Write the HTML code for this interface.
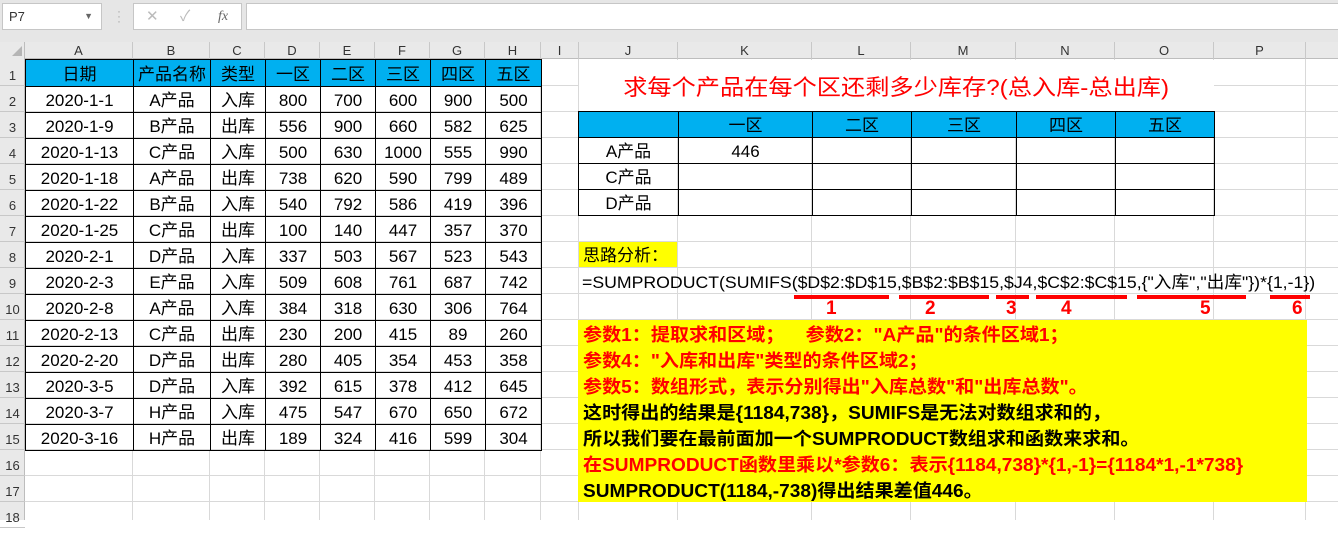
<!DOCTYPE html>
<html><head><meta charset="utf-8">
<style>
*{margin:0;padding:0;box-sizing:border-box}
body{width:1338px;height:520px;overflow:hidden;background:#fff;position:relative;font-family:"Liberation Sans","Noto Sans CJK SC",sans-serif;color:#000}
.a{position:absolute}
.vl{position:absolute;width:1px;background:#d9d9d9}
.hl{position:absolute;height:1px;background:#d9d9d9}
.ch{position:absolute;top:42px;height:17px;font-size:13px;color:#333;text-align:center;line-height:17px;border-right:1px solid #c8c8c8}
.rh{position:absolute;left:0;width:25px;font-size:13px;color:#333;text-align:center;border-bottom:1px solid #c8c8c8}
table{border-collapse:collapse;position:absolute;table-layout:fixed}
td{border:1px solid #000;text-align:center;font-size:17px;padding:3px 0 0 0;white-space:nowrap;overflow:hidden;line-height:20px}
.bl{background:#00b0f0}
.y{background:#ffff00}
.r{color:#f00}
.t{position:absolute;left:583px;font-size:18px;font-weight:bold;white-space:nowrap;line-height:26px;transform-origin:0 0;transform:scaleX(1.06)}
.u{position:absolute;top:295px;height:4px;background:#f00}
.n{position:absolute;top:298px;color:#f00;font-size:19px;font-weight:bold}
</style></head><body>
<div class="a" style="left:0;top:0;width:1338px;height:42px;background:#e6e6e6"></div>
<div class="a" style="left:2px;top:3px;width:100px;height:27px;background:#fff;border:1px solid #c6c6c6;font-size:13px;line-height:25px;padding-left:6px;color:#333">P7<span style="position:absolute;right:8px;top:0;font-size:9px;color:#666">▼</span></div>
<div class="a" style="left:117px;top:9px;font-size:12px;color:#aaa;line-height:5px">·<br>·<br>·</div>
<div class="a" style="left:133px;top:3px;width:109px;height:27px;background:#fff;border:1px solid #c6c6c6;font-size:15px;line-height:25px;color:#bbb"><span style="position:absolute;left:12px">✕</span><span style="position:absolute;left:46px">✓</span><span style="position:absolute;left:84px;color:#666;font-style:italic;font-family:'Liberation Serif',serif;font-size:14px">fx</span></div>
<div class="a" style="left:246px;top:3px;width:1100px;height:27px;background:#fff;border:1px solid #c6c6c6"></div>
<div class="a" style="left:0;top:42px;width:1338px;height:17px;background:#e9e9e9;border-bottom:1px solid #bdbdbd"></div>
<div class="a" style="left:0;top:42px;width:25px;height:478px;background:#e9e9e9;border-right:1px solid #bdbdbd"></div>
<div class="a" style="left:12px;top:46px;width:0;height:0;border-left:10px solid transparent;border-bottom:10px solid #b5b5b5"></div>
<div class="ch" style="left:25px;width:108px">A</div>
<div class="ch" style="left:133px;width:77px">B</div>
<div class="ch" style="left:210px;width:55px">C</div>
<div class="ch" style="left:265px;width:55px">D</div>
<div class="ch" style="left:320px;width:55px">E</div>
<div class="ch" style="left:375px;width:55px">F</div>
<div class="ch" style="left:430px;width:55px">G</div>
<div class="ch" style="left:485px;width:56px">H</div>
<div class="ch" style="left:541px;width:38px">I</div>
<div class="ch" style="left:579px;width:99px">J</div>
<div class="ch" style="left:678px;width:134px">K</div>
<div class="ch" style="left:812px;width:99px">L</div>
<div class="ch" style="left:911px;width:105px">M</div>
<div class="ch" style="left:1016px;width:99px">N</div>
<div class="ch" style="left:1115px;width:99px">O</div>
<div class="ch" style="left:1214px;width:92px">P</div>
<div class="rh" style="top:59px;height:27px;line-height:34px">1</div>
<div class="rh" style="top:86px;height:26px;line-height:32px">2</div>
<div class="rh" style="top:112px;height:26px;line-height:32px">3</div>
<div class="rh" style="top:138px;height:26px;line-height:32px">4</div>
<div class="rh" style="top:164px;height:26px;line-height:32px">5</div>
<div class="rh" style="top:190px;height:26px;line-height:32px">6</div>
<div class="rh" style="top:216px;height:26px;line-height:32px">7</div>
<div class="rh" style="top:242px;height:26px;line-height:32px">8</div>
<div class="rh" style="top:268px;height:26px;line-height:32px">9</div>
<div class="rh" style="top:294px;height:26px;line-height:32px">10</div>
<div class="rh" style="top:320px;height:26px;line-height:32px">11</div>
<div class="rh" style="top:346px;height:26px;line-height:32px">12</div>
<div class="rh" style="top:372px;height:26px;line-height:32px">13</div>
<div class="rh" style="top:398px;height:26px;line-height:32px">14</div>
<div class="rh" style="top:424px;height:26px;line-height:32px">15</div>
<div class="rh" style="top:450px;height:26px;line-height:32px">16</div>
<div class="rh" style="top:476px;height:26px;line-height:32px">17</div>
<div class="rh" style="top:502px;height:26px;line-height:32px">18</div>
<div class="vl" style="left:540px;top:59px;height:461px"></div>
<div class="vl" style="left:578px;top:59px;height:461px"></div>
<div class="vl" style="left:677px;top:59px;height:461px"></div>
<div class="vl" style="left:811px;top:59px;height:461px"></div>
<div class="vl" style="left:910px;top:59px;height:461px"></div>
<div class="vl" style="left:1015px;top:59px;height:461px"></div>
<div class="vl" style="left:1114px;top:59px;height:461px"></div>
<div class="vl" style="left:1213px;top:59px;height:461px"></div>
<div class="vl" style="left:1305px;top:59px;height:461px"></div>
<div class="vl" style="left:132px;top:450px;height:70px"></div>
<div class="vl" style="left:209px;top:450px;height:70px"></div>
<div class="vl" style="left:264px;top:450px;height:70px"></div>
<div class="vl" style="left:319px;top:450px;height:70px"></div>
<div class="vl" style="left:374px;top:450px;height:70px"></div>
<div class="vl" style="left:429px;top:450px;height:70px"></div>
<div class="vl" style="left:484px;top:450px;height:70px"></div>
<div class="hl" style="left:25px;top:85px;width:1313px"></div>
<div class="hl" style="left:25px;top:111px;width:1313px"></div>
<div class="hl" style="left:25px;top:137px;width:1313px"></div>
<div class="hl" style="left:25px;top:163px;width:1313px"></div>
<div class="hl" style="left:25px;top:189px;width:1313px"></div>
<div class="hl" style="left:25px;top:215px;width:1313px"></div>
<div class="hl" style="left:25px;top:241px;width:1313px"></div>
<div class="hl" style="left:25px;top:267px;width:1313px"></div>
<div class="hl" style="left:25px;top:293px;width:1313px"></div>
<div class="hl" style="left:25px;top:319px;width:1313px"></div>
<div class="hl" style="left:25px;top:345px;width:1313px"></div>
<div class="hl" style="left:25px;top:371px;width:1313px"></div>
<div class="hl" style="left:25px;top:397px;width:1313px"></div>
<div class="hl" style="left:25px;top:423px;width:1313px"></div>
<div class="hl" style="left:25px;top:449px;width:1313px"></div>
<div class="hl" style="left:25px;top:475px;width:1313px"></div>
<div class="hl" style="left:25px;top:501px;width:1313px"></div>
<table style="left:25px;top:59px;width:516px">
<colgroup><col style="width:108px"><col style="width:77px"><col style="width:55px"><col style="width:55px"><col style="width:55px"><col style="width:55px"><col style="width:55px"><col style="width:56px"></colgroup>
<tr class="bl" style="height:27px"><td>日期</td><td>产品名称</td><td>类型</td><td>一区</td><td>二区</td><td>三区</td><td>四区</td><td>五区</td></tr>
<tr style="height:26px"><td>2020-1-1</td><td>A产品</td><td>入库</td><td>800</td><td>700</td><td>600</td><td>900</td><td>500</td></tr>
<tr style="height:26px"><td>2020-1-9</td><td>B产品</td><td>出库</td><td>556</td><td>900</td><td>660</td><td>582</td><td>625</td></tr>
<tr style="height:26px"><td>2020-1-13</td><td>C产品</td><td>入库</td><td>500</td><td>630</td><td>1000</td><td>555</td><td>990</td></tr>
<tr style="height:26px"><td>2020-1-18</td><td>A产品</td><td>出库</td><td>738</td><td>620</td><td>590</td><td>799</td><td>489</td></tr>
<tr style="height:26px"><td>2020-1-22</td><td>B产品</td><td>入库</td><td>540</td><td>792</td><td>586</td><td>419</td><td>396</td></tr>
<tr style="height:26px"><td>2020-1-25</td><td>C产品</td><td>出库</td><td>100</td><td>140</td><td>447</td><td>357</td><td>370</td></tr>
<tr style="height:26px"><td>2020-2-1</td><td>D产品</td><td>入库</td><td>337</td><td>503</td><td>567</td><td>523</td><td>543</td></tr>
<tr style="height:26px"><td>2020-2-3</td><td>E产品</td><td>入库</td><td>509</td><td>608</td><td>761</td><td>687</td><td>742</td></tr>
<tr style="height:26px"><td>2020-2-8</td><td>A产品</td><td>入库</td><td>384</td><td>318</td><td>630</td><td>306</td><td>764</td></tr>
<tr style="height:26px"><td>2020-2-13</td><td>C产品</td><td>出库</td><td>230</td><td>200</td><td>415</td><td>89</td><td>260</td></tr>
<tr style="height:26px"><td>2020-2-20</td><td>D产品</td><td>出库</td><td>280</td><td>405</td><td>354</td><td>453</td><td>358</td></tr>
<tr style="height:26px"><td>2020-3-5</td><td>D产品</td><td>入库</td><td>392</td><td>615</td><td>378</td><td>412</td><td>645</td></tr>
<tr style="height:26px"><td>2020-3-7</td><td>H产品</td><td>入库</td><td>475</td><td>547</td><td>670</td><td>650</td><td>672</td></tr>
<tr style="height:26px"><td>2020-3-16</td><td>H产品</td><td>出库</td><td>189</td><td>324</td><td>416</td><td>599</td><td>304</td></tr>
</table>
<div class="a" style="left:579px;top:60px;width:635px;height:51px;background:#fff;text-align:center;line-height:56px;font-size:22px;color:#f00;white-space:nowrap"><span style="display:inline-block;transform:scaleX(1.1)">求每个产品在每个区还剩多少库存?(总入库-总出库)</span></div>
<table style="left:578px;top:111px;width:637px">
<colgroup><col style="width:100px"><col style="width:134px"><col style="width:99px"><col style="width:105px"><col style="width:99px"><col style="width:99px"></colgroup>
<tr class="bl" style="height:26px"><td>&nbsp;</td><td>一区</td><td>二区</td><td>三区</td><td>四区</td><td>五区</td></tr>
<tr style="height:26px"><td>A产品</td><td>446</td><td></td><td></td><td></td><td></td></tr>
<tr style="height:26px"><td>C产品</td><td></td><td></td><td></td><td></td><td></td></tr>
<tr style="height:26px"><td>D产品</td><td></td><td></td><td></td><td></td><td></td></tr>
</table>
<div class="a y" style="left:579px;top:242px;width:98px;height:25px;font-size:17px;line-height:28px;padding-left:4px">思路分析：</div>
<div class="a" style="left:582px;top:268px;font-size:17px;line-height:30px;white-space:nowrap;transform-origin:0 0;transform:scaleX(1.04)">=SUMPRODUCT(SUMIFS($D$2:$D$15,$B$2:$B$15,$J4,$C$2:$C$15,{"入库","出库"})*{1,-1})</div>
<div class="u" style="left:794px;width:95px"></div>
<div class="u" style="left:899px;width:90px"></div>
<div class="u" style="left:996px;width:33px"></div>
<div class="u" style="left:1036px;width:91px"></div>
<div class="u" style="left:1137px;width:109px"></div>
<div class="u" style="left:1270px;width:40px"></div>
<div class="n" style="left:826px">1</div>
<div class="n" style="left:925px">2</div>
<div class="n" style="left:1006px">3</div>
<div class="n" style="left:1061px">4</div>
<div class="n" style="left:1200px">5</div>
<div class="n" style="left:1292px">6</div>
<div class="a y" style="left:578px;top:320px;width:729px;height:182px"></div>
<div class="t r" style="top:322px">参数1：提取求和区域；&nbsp;&nbsp;&nbsp;&nbsp;参数2："A产品"的条件区域1；</div>
<div class="t r" style="top:348px">参数4："入库和出库"类型的条件区域2；</div>
<div class="t r" style="top:374px">参数5：数组形式，表示分别得出"入库总数"和"出库总数"。</div>
<div class="t" style="top:400px">这时得出的结果是{1184,738}，SUMIFS是无法对数组求和的，</div>
<div class="t" style="top:426px">所以我们要在最前面加一个SUMPRODUCT数组求和函数来求和。</div>
<div class="t r" style="top:452px">在SUMPRODUCT函数里乘以*参数6：表示{1184,738}*{1,-1}={1184*1,-1*738}</div>
<div class="t" style="top:478px">SUMPRODUCT(1184,-738)得出结果差值446。</div>
</body></html>
